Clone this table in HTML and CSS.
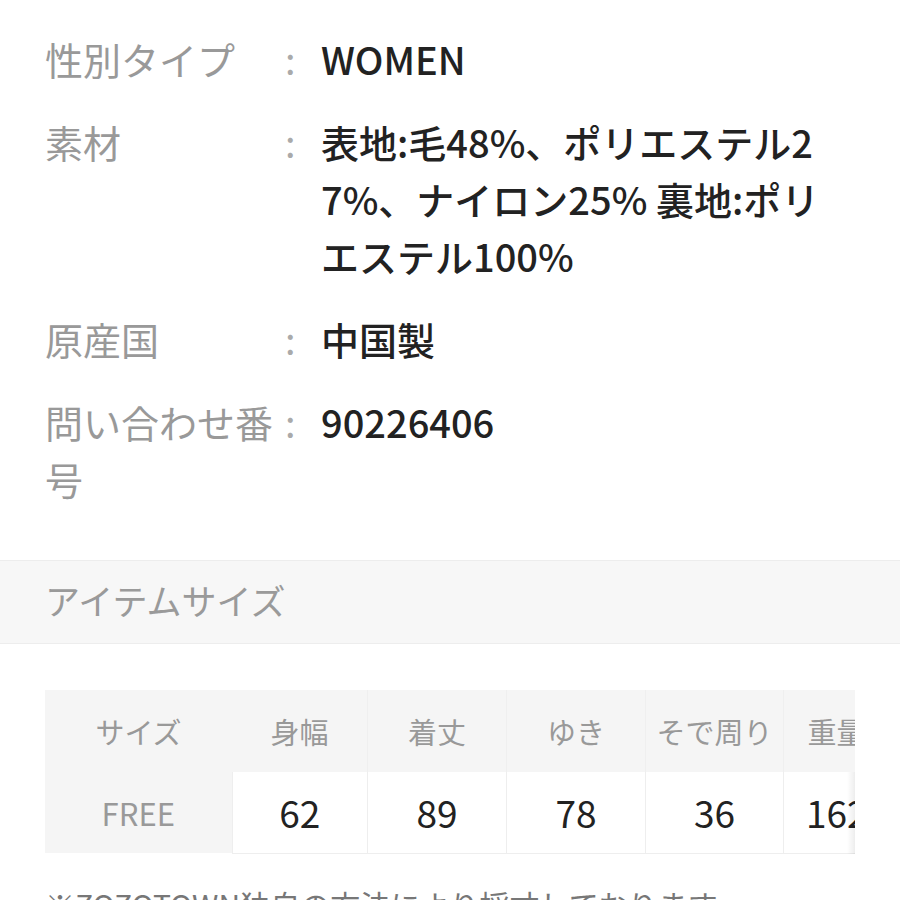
FILE: index.html
```html
<!DOCTYPE html>
<html lang="ja">
<head>
<meta charset="utf-8">
<title>商品情報</title>
<link rel="stylesheet" href="styles.css">
</head>
<body>
<div class="page">
  <dl class="spec">
    <div class="row">
      <dt class="label">性別タイプ</dt>
      <dd class="colon">:</dd>
      <dd class="value">WOMEN</dd>
    </div>
    <div class="row">
      <dt class="label">素材</dt>
      <dd class="colon">:</dd>
      <dd class="value">表地:毛48%、ポリエステル27%、ナイロン25% 裏地:ポリエステル100%</dd>
    </div>
    <div class="row">
      <dt class="label">原産国</dt>
      <dd class="colon">:</dd>
      <dd class="value">中国製</dd>
    </div>
    <div class="row">
      <dt class="label">問い合わせ番号</dt>
      <dd class="colon">:</dd>
      <dd class="value">90226406</dd>
    </div>
  </dl>

  <div class="band">アイテムサイズ</div>

  <div class="table-wrap">
    <table class="size-table">
      <thead>
        <tr>
          <th class="c-size">サイズ</th>
          <th class="c-n">身幅</th>
          <th class="c-n">着丈</th>
          <th class="c-n">ゆき</th>
          <th class="c-n">そで周り</th>
          <th class="c-n">重量</th>
        </tr>
      </thead>
      <tbody>
        <tr>
          <th class="c-size">FREE</th>
          <td>62</td>
          <td>89</td>
          <td>78</td>
          <td>36</td>
          <td>162</td>
        </tr>
      </tbody>
    </table>
    <div class="shade"></div>
  </div>

  <p class="note">※ZOZOTOWN独自の方法により採寸しております。</p>
</div>
</body>
</html>
```
FILE: styles.css
```css
html, body {
  margin: 0;
  padding: 0;
  background: #ffffff;
}
body {
  font-family: "Noto Sans CJK JP", "Noto Sans", sans-serif;
  color: #222;
}
.page {
  width: 900px;
  height: 900px;
  overflow: hidden;
}
.spec {
  margin: 0;
  padding: 30px 45px 0 45px;
  display: flex;
  flex-direction: column;
  gap: 26px;
}
.row {
  display: flex;
  font-size: 38px;
  line-height: 57px;
}
.label {
  width: 236px;
  color: #999;
  flex: none;
  word-break: break-all;
}
.colon {
  margin: 0;
  width: 40px;
  flex: none;
  color: #aaa;
  padding-left: 4px;
  box-sizing: border-box;
}
.value {
  margin: 0;
  width: 500px;
  color: #222;
  font-weight: 500;
  word-break: break-all;
}
.band {
  margin-top: 53px;
  height: 84px;
  box-sizing: border-box;
  background: #f7f7f7;
  border-top: 1px solid #ededed;
  border-bottom: 1px solid #ededed;
  padding-left: 45px;
  font-size: 35px;
  line-height: 78px;
  color: #9a9a9a;
}
.table-wrap {
  position: relative;
  margin: 46px 0 0 45px;
  width: 810px;
  overflow: hidden;
}
.size-table {
  border-collapse: collapse;
  table-layout: fixed;
  width: 840px;
}
.size-table th,
.size-table td {
  padding: 0;
  text-align: center;
  font-weight: 400;
}
.size-table thead th {
  height: 82px;
  background: #f5f5f5;
  color: #999;
  font-size: 29px;
  border-right: 1px solid #efefef;
}
.size-table thead th.c-size {
  border-right: none;
}
.c-size { width: 187px; }
.c-n:nth-child(2) { width: 135px; }
.c-n:nth-child(3) { width: 138px; }
.c-n:nth-child(4) { width: 138px; }
.c-n:nth-child(5) { width: 137px; }
.c-n:nth-child(6) { width: 105px; }
.size-table tbody th {
  height: 81px;
  background: #f5f5f5;
  color: #999;
  font-size: 31px;
}
.size-table tbody td {
  background: #fff;
  border-left: 1px solid #eeeeee;
  border-bottom: 1px solid #eeeeee;
  color: #222;
  font-size: 37px;
}
.shade {
  position: absolute;
  right: 0;
  top: 82px;
  bottom: 0;
  width: 8px;
  background: linear-gradient(to right, rgba(0,0,0,0), rgba(0,0,0,0.07));
}
.note {
  margin: 28px 0 0 45px;
  font-size: 30px;
  line-height: 45px;
  color: #777;
}
```
